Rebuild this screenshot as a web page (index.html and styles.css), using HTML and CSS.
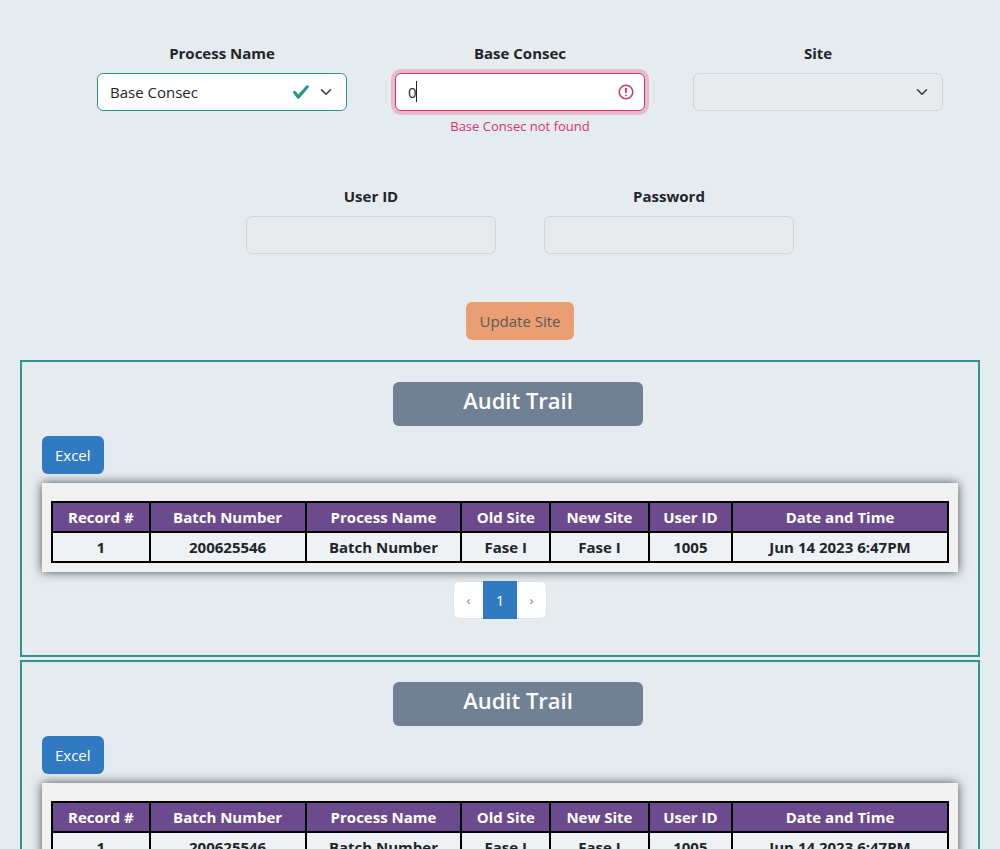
FILE: index.html
```html
<!DOCTYPE html>
<html lang="en">
<head>
<meta charset="utf-8">
<meta name="viewport" content="width=device-width, initial-scale=1">
<title>Update Site</title>
<link rel="stylesheet" href="styles.css">
</head>
<body>
<main class="page">
  <form class="site-form">
    <div class="form-row">
      <div class="field">
        <label class="field-label" for="process">Process Name</label>
        <div class="control">
          <select class="input input-valid" id="process"><option>Base Consec</option></select>
          <span class="icons">
            <svg class="icon-status" viewBox="0 0 8 8" aria-hidden="true"><path fill="#2a9490" d="M2.3 6.73.6 4.53c-.4-1.04.46-1.4 1.1-.8l1.1 1.4 3.4-3.8c.6-.63 1.6-.27 1.2.7l-4 4.6c-.43.5-.8.4-1.1.1z"/></svg>
            <svg class="icon-chevron" viewBox="0 0 16 16" aria-hidden="true"><path fill="none" stroke="#343a40" stroke-linecap="round" stroke-linejoin="round" stroke-width="2" d="m2 5 6 6 6-6"/></svg>
          </span>
        </div>
      </div>
      <div class="field">
        <label class="field-label" for="consec">Base Consec</label>
        <div class="control">
          <input class="input input-invalid" id="consec" type="text" value="0" aria-describedby="consec-error">
          <span class="caret" aria-hidden="true"></span>
          <span class="icons icons-text">
            <svg class="icon-status" viewBox="0 0 12 12" fill="none" stroke="#d6336c" aria-hidden="true"><circle cx="6" cy="6" r="4.5"/><path stroke-linejoin="round" d="M5.8 3.6h.4L6 6.5z"/><circle cx="6" cy="8.2" r=".6" fill="#d6336c" stroke="none"/></svg>
          </span>
        </div>
        <div class="feedback" id="consec-error">Base Consec not found</div>
      </div>
      <div class="field">
        <label class="field-label" for="site">Site</label>
        <div class="control">
          <select class="input" id="site" disabled></select>
          <span class="icons">
            <svg class="icon-chevron" viewBox="0 0 16 16" aria-hidden="true"><path fill="none" stroke="#343a40" stroke-linecap="round" stroke-linejoin="round" stroke-width="2" d="m2 5 6 6 6-6"/></svg>
          </span>
        </div>
      </div>
    </div>
    <div class="form-row">
      <div class="field">
        <label class="field-label" for="user">User ID</label>
        <input class="input" id="user" type="text" disabled>
      </div>
      <div class="field">
        <label class="field-label" for="password">Password</label>
        <input class="input" id="password" type="password" disabled>
      </div>
    </div>
    <button class="btn btn-update" type="submit" disabled>Update Site</button>
  </form>

  <section class="panel">
    <h2 class="panel-title">Audit Trail</h2>
    <button class="btn btn-primary" type="button">Excel</button>
    <div class="card">
      <table class="audit">
        <colgroup><col class="c-record"><col class="c-name"><col class="c-name"><col class="c-old"><col class="c-new"><col class="c-user"><col class="c-date"></colgroup>
        <thead><tr><th>Record #</th><th>Batch Number</th><th>Process Name</th><th>Old Site</th><th>New Site</th><th>User ID</th><th>Date and Time</th></tr></thead>
        <tbody><tr><td>1</td><td>200625546</td><td>Batch Number</td><td>Fase I</td><td>Fase I</td><td>1005</td><td>Jun 14 2023 6:47PM</td></tr></tbody>
      </table>
    </div>
    <nav class="pager" aria-label="Audit pages">
      <button class="page-step" type="button" aria-label="Previous">‹</button>
      <button class="page-current" type="button" aria-current="page">1</button>
      <button class="page-step" type="button" aria-label="Next">›</button>
    </nav>
  </section>

  <section class="panel">
    <h2 class="panel-title">Audit Trail</h2>
    <button class="btn btn-primary" type="button">Excel</button>
    <div class="card">
      <table class="audit">
        <colgroup><col class="c-record"><col class="c-name"><col class="c-name"><col class="c-old"><col class="c-new"><col class="c-user"><col class="c-date"></colgroup>
        <thead><tr><th>Record #</th><th>Batch Number</th><th>Process Name</th><th>Old Site</th><th>New Site</th><th>User ID</th><th>Date and Time</th></tr></thead>
        <tbody><tr><td>1</td><td>200625546</td><td>Batch Number</td><td>Fase I</td><td>Fase I</td><td>1005</td><td>Jun 14 2023 6:47PM</td></tr></tbody>
      </table>
    </div>
    <nav class="pager" aria-label="Audit pages">
      <button class="page-step" type="button" aria-label="Previous">‹</button>
      <button class="page-current" type="button" aria-current="page">1</button>
      <button class="page-step" type="button" aria-label="Next">›</button>
    </nav>
  </section>
</main>
</body>
</html>
```
FILE: styles.css
```css
* { box-sizing: border-box; }
html { scrollbar-width: none; }
body {
  margin: 0;
  background: #e6ebef;
  color: #212529;
  font: 400 15px/24px "Segoe UI", "Open Sans", "Noto Sans", sans-serif;
}
.page {
  display: flex;
  flex-direction: column;
  gap: 3px;
  padding: 41px 20px 20px;
}
.site-form {
  display: flex;
  flex-direction: column;
  align-items: center;
  gap: 48px;
  padding: 0 0 17px 40px;
}
.form-row {
  display: flex;
  flex-wrap: wrap;
  justify-content: center;
  gap: 48px;
}
.field {
  display: flex;
  flex-direction: column;
  width: 250px;
}
.field-label {
  margin-bottom: 8px;
  text-align: center;
  font-weight: 700;
}
.control { position: relative; }
.input {
  display: block;
  appearance: none;
  width: 100%;
  height: 38px;
  padding: 6px 12px;
  border: 1px solid #ced4da;
  border-radius: 6px;
  background: #fff;
  color: #212529;
  font: inherit;
}
.input:disabled {
  background: #e7ebee;
  opacity: 1;
}
.input-valid { border-color: #2a9490; }
.input-invalid {
  border-color: #d6336c;
  box-shadow: 0 0 0 4px rgba(214, 51, 108, .25);
  outline: none;
}
.icons {
  position: absolute;
  top: 0;
  right: 13px;
  bottom: 0;
  display: flex;
  align-items: center;
  gap: 8px;
  pointer-events: none;
}
.icons-text { right: 10px; }
.icon-status { width: 18px; height: 18px; }
.icon-chevron { width: 16px; height: 12px; }
.caret {
  position: absolute;
  top: 8px;
  left: 21px;
  width: 1px;
  height: 21px;
  background: #212529;
}
.feedback {
  margin-top: 5px;
  color: #d6336c;
  font-size: 13px;
  line-height: 20px;
  text-align: center;
}
.btn {
  height: 38px;
  padding: 0 13px;
  border: 0;
  border-radius: 6px;
  font: inherit;
}
.btn-update {
  background: #e99e74;
  color: #5d5955;
}
.btn-primary {
  align-self: flex-start;
  background: #307ac2;
  color: #fff;
}
.panel {
  display: flex;
  flex-direction: column;
  padding: 20px 20px 36px;
  border: 2px solid #2f9491;
}
.panel-title {
  align-self: center;
  width: 250px;
  height: 44px;
  margin: 0 0 10px 36px;
  border-radius: 6px;
  background: #6f8192;
  color: #fff;
  font-size: 22px;
  font-weight: 600;
  line-height: 37px;
  text-align: center;
}
.card {
  margin-top: 9px;
  padding: 18px 9px 9px;
  background: #f1f1f1;
  box-shadow: 0 0 10px #4c5054;
}
.audit {
  width: 100%;
  table-layout: fixed;
  border-collapse: collapse;
  font-weight: 700;
  text-align: center;
}
.audit th,
.audit td {
  height: 30px;
  padding: 0;
  border: 2px solid #000;
}
.audit th { background: #6c4a8e; color: #fff; }
.audit td { background: #eef2f5; }
.c-record { width: 10.9%; }
.c-name { width: 17.4%; }
.c-old { width: 9.9%; }
.c-new { width: 11%; }
.c-user { width: 9.3%; }
.c-date { width: 24.1%; }
.pager {
  display: flex;
  align-items: center;
  justify-content: center;
  margin-top: 9px;
}
.pager button {
  border: 1px solid #dee2e6;
  background: #fff;
  font: inherit;
}
.pager .page-step {
  width: 30px;
  height: 38px;
  padding: 0;
  color: #6c7f91;
  font-size: 13px;
}
.pager .page-step:first-child { border-radius: 6px 0 0 6px; border-right: 0; }
.pager .page-step:last-child { border-radius: 0 6px 6px 0; border-left: 0; }
.pager .page-current {
  width: 34px;
  height: 38px;
  padding: 0;
  border-color: #307ac2;
  background: #307ac2;
  color: #fff;
}
```
